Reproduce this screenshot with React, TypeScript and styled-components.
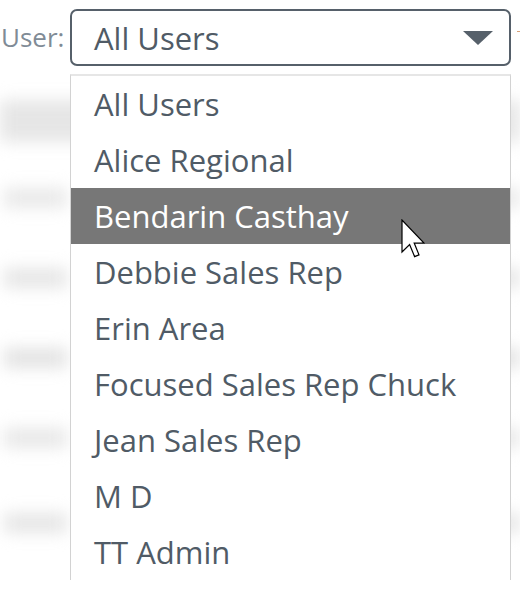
import React from "react";
import styled, { createGlobalStyle } from "styled-components";

const GlobalStyle = createGlobalStyle`
  html, body { margin: 0; padding: 0; background: #ffffff; }
  body { font-family: "Open Sans", "Noto Sans", sans-serif; }
  * { box-sizing: border-box; }
`;

const Page = styled.div`
  position: relative;
  width: 520px;
  height: 590px;
  overflow: hidden;
  background: #ffffff;
`;

const Backdrop = styled.div`
  position: absolute;
  inset: 0;
  filter: blur(8px);
  display: flex;
  flex-direction: column;
  padding-top: 100px;
`;

const HeaderBand = styled.div`
  height: 42px;
  background: #e6e6e6;
  margin-bottom: 16px;
`;

const BlurRow = styled.div<{ $h: number }>`
  height: ${(p) => p.$h}px;
  display: flex;
  align-items: center;
  padding: 0 0 0 4px;
  gap: 20px;
`;

const BlurBar = styled.div<{ $shade: string; $w: number }>`
  width: ${(p) => p.$w}px;
  height: 20px;
  background: ${(p) => p.$shade};
`;

const Toolbar = styled.div`
  position: relative;
  display: flex;
  align-items: flex-start;
  height: 74px;
  padding: 9px 9px 0 0;
`;

const Label = styled.span`
  flex: 1;
  font-size: 26px;
  color: #808b96;
  line-height: 57px;
  padding-left: 1px;
`;

const SelectBox = styled.div`
  width: 441px;
  height: 57px;
  border: 2px solid #56606a;
  border-radius: 7px;
  background: #ffffff;
  display: flex;
  align-items: center;
  justify-content: space-between;
  padding: 0 16px 0 22px;
  font-size: 31px;
  color: #505b66;
`;

const Caret = styled.svg`
  width: 30px;
  height: 14px;
  display: block;
`;

const TrailingMark = styled.span`
  position: absolute;
  left: 517px;
  top: 31px;
  width: 3px;
  height: 1px;
  background: #d9a27a;
`;

const List = styled.ul`
  position: absolute;
  left: 70px;
  top: 74px;
  width: 441px;
  margin: 0;
  padding: 0;
  list-style: none;
  background: #ffffff;
  border: 1px solid #d2d2d2;
  border-top: 2px solid #e6e6e6;
  border-bottom: none;
`;

const Item = styled.li<{ $active?: boolean }>`
  height: 56px;
  display: flex;
  align-items: center;
  padding-left: 23px;
  font-size: 31px;
  color: ${(p) => (p.$active ? "#ffffff" : "#505b66")};
  background: ${(p) => (p.$active ? "#777777" : "transparent")};
  white-space: nowrap;
`;

const Pointer = styled.svg`
  position: absolute;
  left: 401px;
  top: 219px;
  width: 24px;
  height: 40px;
`;

const users = [
  "All Users",
  "Alice Regional",
  "Bendarin Casthay",
  "Debbie Sales Rep",
  "Erin Area",
  "Focused Sales Rep Chuck",
  "Jean Sales Rep",
  "M D",
  "TT Admin",
];

const rows = [
  { h: 80, shade: "#e9e9e9" },
  { h: 80, shade: "#e6e6e6" },
  { h: 80, shade: "#e3e3e3" },
  { h: 80, shade: "#e8e8e8" },
  { h: 90, shade: "#e6e6e6" },
];

export default function App() {
  return (
    <Page>
      <GlobalStyle />
      <Backdrop>
        <HeaderBand />
        {rows.map((r, i) => (
          <BlurRow key={i} $h={r.h}>
            <BlurBar $shade={r.shade} $w={64} />
            <BlurBar $shade={r.shade} $w={380} />
            <BlurBar $shade={r.shade} $w={40} />
          </BlurRow>
        ))}
      </Backdrop>
      <Toolbar>
        <Label>User:</Label>
        <SelectBox>
          <span>All Users</span>
          <Caret viewBox="0 0 30 14">
            <polygon points="0,0 30,0 15,14" fill="#56606a" />
          </Caret>
        </SelectBox>
        <TrailingMark />
      </Toolbar>
      <List>
        {users.map((u, i) => (
          <Item key={u} $active={i === 2}>
            {u}
          </Item>
        ))}
      </List>
      <Pointer viewBox="0 0 12 20">
        <path
          d="M0.5,0.5 L0.5,16.5 L4.3,12.8 L6.8,18.8 L9,17.9 L6.6,12 L11.5,12 Z"
          fill="#ffffff"
          stroke="#000000"
          strokeWidth="0.6"
          strokeLinejoin="miter"
        />
      </Pointer>
    </Page>
  );
}
